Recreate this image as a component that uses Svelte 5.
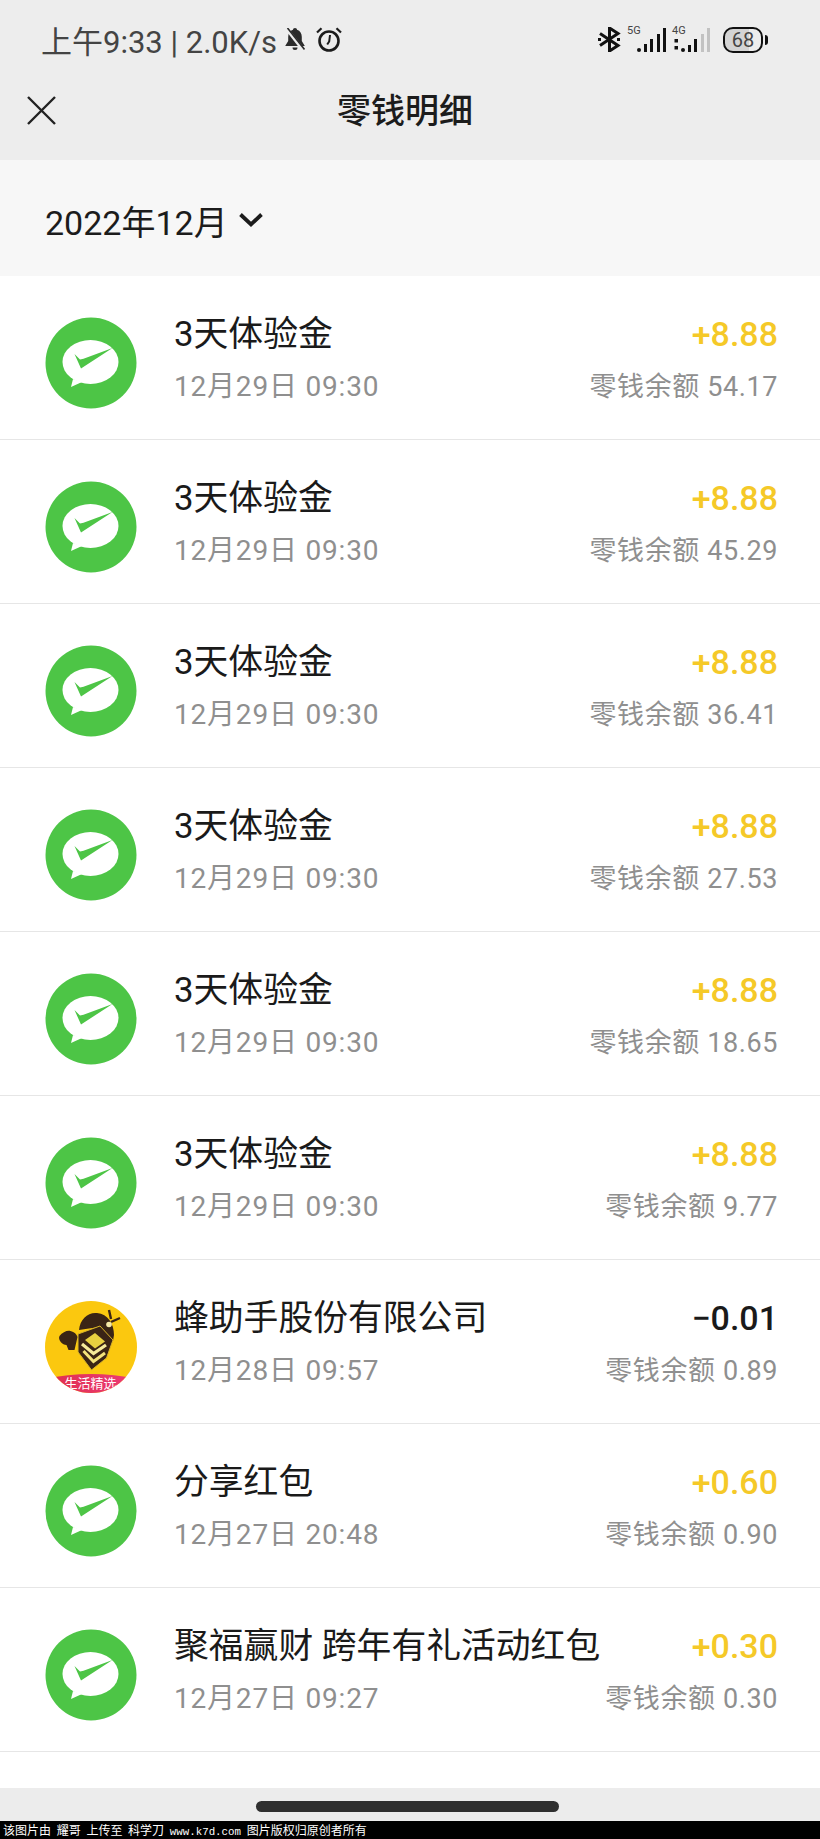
<script>
  const rows = [
    { kind: 'pay', title: '3天体验金', time: '12月29日 09:30', amount: '+8.88', balance: '54.17' },
    { kind: 'pay', title: '3天体验金', time: '12月29日 09:30', amount: '+8.88', balance: '45.29' },
    { kind: 'pay', title: '3天体验金', time: '12月29日 09:30', amount: '+8.88', balance: '36.41' },
    { kind: 'pay', title: '3天体验金', time: '12月29日 09:30', amount: '+8.88', balance: '27.53' },
    { kind: 'pay', title: '3天体验金', time: '12月29日 09:30', amount: '+8.88', balance: '18.65' },
    { kind: 'pay', title: '3天体验金', time: '12月29日 09:30', amount: '+8.88', balance: '9.77' },
    { kind: 'bee', title: '蜂助手股份有限公司', time: '12月28日 09:57', amount: '−0.01', balance: '0.89' },
    { kind: 'pay', title: '分享红包', time: '12月27日 20:48', amount: '+0.60', balance: '0.90' },
    { kind: 'pay', title: '聚福赢财 跨年有礼活动红包', time: '12月27日 09:27', amount: '+0.30', balance: '0.30' }
  ];
</script>

<div class="page">
  <header class="top">
    <div class="status">
      <div class="status__left">
        <span>上午9:33 | 2.0K/s</span>
        <svg class="bell" width="20" height="23" viewBox="0 0 20 23">
          <path d="M10 0c1.200 0 2 .8 2 1.800 3.200 1 4.800 3.800 4.800 7.200v4l3 5H.2l3-5V9c0-3.400 1.600-6.200 4.800-7.200C8 .8 8.800 0 10 0z" fill="#2b2b2b"/>
          <path d="M7.500 19.500h5a2.500 2.500 0 0 1-5 0z" fill="#2b2b2b"/>
          <path d="M1 0l18 23" stroke="#ededed" stroke-width="3.500"/>
          <path d="M2.500 0l17 21.500" stroke="#2b2b2b" stroke-width="1.600"/>
        </svg>
        <svg class="clock" width="26" height="25" viewBox="0 0 26 25" fill="none" stroke="#1c1c1c">
          <circle cx="13" cy="14" r="9.500" stroke-width="2.600"/>
          <path d="M14 8l-.8 6.500-2 3" stroke-width="2"/>
          <path d="M1 5.500L5.500 1.200M25 5.500L20.500 1.200" stroke-width="2.200"/>
        </svg>
      </div>
      <div class="status__right">
        <svg class="bt" width="23" height="25" viewBox="0 0 23 25" fill="none" stroke="#111" stroke-width="3">
          <path d="M2 6.500l18 12-8.500 5.500V1L20 6.500 2 18.500"/>
          <rect x="0" y="11" width="3" height="3" fill="#111" stroke="none"/>
          <rect x="19" y="11" width="3" height="3" fill="#111" stroke="none"/>
        </svg>
        <div class="signal signal--five">
          <span class="signal__tag">5G</span>
          <svg width="29" height="25" viewBox="0 0 29 25" fill="#111">
            <circle cx="2" cy="23" r="2"/>
            <rect x="7" y="17" width="3" height="8"/>
            <rect x="13" y="12" width="3" height="13"/>
            <rect x="20" y="7" width="3" height="18"/>
            <rect x="26" y="1" width="3" height="24"/>
          </svg>
        </div>
        <div class="signal">
          <span class="signal__tag">4G</span>
          <svg width="38" height="25" viewBox="0 0 38 25" fill="#111">
            <rect x="2.500" y="12" width="3.500" height="3.500"/>
            <rect x="2.500" y="19" width="3.500" height="3.500"/>
            <circle cx="11" cy="23" r="2"/>
            <rect x="16" y="18" width="3" height="7"/>
            <rect x="22" y="12" width="3" height="13"/>
            <rect x="29" y="7" width="3" height="18" fill="#c2c2c2"/>
            <rect x="35" y="1" width="3" height="24" fill="#c2c2c2"/>
          </svg>
        </div>
        <div class="battery">
          <div class="battery__body"><span>68</span></div>
          <div class="battery__cap"></div>
        </div>
      </div>
    </div>
    <div class="nav">
      <svg class="close" width="29" height="29" viewBox="0 0 29 29" fill="none" stroke="#222" stroke-width="2.400">
        <path d="M1 1l27 27M28 1L1 28"/>
      </svg>
      <h1>零钱明细</h1>
    </div>
  </header>

  <div class="month">
    <span>2022年12月</span>
    <svg width="24" height="16" viewBox="0 0 24 16" fill="none" stroke="#1c1c1c" stroke-width="3.800">
      <path d="M1.500 2.500L12 12.500 22.500 2.500"/>
    </svg>
  </div>

  <ul class="list">
    {#each rows as row}
      <li class="row">
        <div class="avatar">
          {#if row.kind === 'pay'}
            <svg width="92" height="92" viewBox="0 0 92 92">
              <circle cx="46" cy="46" r="45.500" fill="#4dc546"/>
              <ellipse cx="45.500" cy="45" rx="28" ry="22" fill="#fff"/>
              <path d="M28 62l-2 8 11-5z" fill="#fff"/>
              <path d="M29.500 37l5.500 5.500 3.500-.8L67.500 31 36 51.500z" fill="#4dc546"/>
            </svg>
          {:else}
            <svg width="92" height="92" viewBox="0 0 92 92">
              <defs>
                <clipPath id="beeClip"><circle cx="46" cy="46" r="46"/></clipPath>
                <linearGradient id="beeBand" x1="0" x2="1" y1="0" y2="0">
                  <stop offset="0" stop-color="#e0304c"/>
                  <stop offset="1" stop-color="#ec3a78"/>
                </linearGradient>
              </defs>
              <g clip-path="url(#beeClip)">
                <rect width="92" height="92" fill="#fbc80f"/>
                <path d="M0 78Q46 68 92 78V92H0z" fill="url(#beeBand)"/>
                <path d="M34 29C35 18 43 11 52 12c11 1 17 11 17 22l-1 6-14-14z" fill="#3a2415"/>
                <path d="M64 9l2 9M75 17l-9 4" stroke="#3a2415" stroke-width="2.400" fill="none"/>
                <circle cx="64" cy="23.500" r="2.800" fill="#f6e9a8"/>
                <path d="M33 33l22-8 13 14-6.500 18L46.500 69 33 51z" fill="#3a2415" stroke="#d9b52a" stroke-width="1"/>
                <path d="M40 39l10-7 10 8.500-10 7z" fill="#e8d040"/>
                <path d="M37 43l11.500 9.500L61 44" fill="none" stroke="#f5ea9a" stroke-width="3.200"/>
                <path d="M38.500 50l10 10.500L60 52" fill="none" stroke="#f3e27a" stroke-width="3"/>
                <path d="M14.500 35c3-4 8-6 11-5 4 1 6 3 7 6l-3 13h-6l-2-5c-4 0-9-5-7-9z" fill="#3a2415"/>
                <text x="45.500" y="87" class="bee-text" text-anchor="middle">生活精选</text>
              </g>
            </svg>
          {/if}
        </div>
        <div class="row__main">
          <div class="row__title">{row.title}</div>
          <div class="row__time">{row.time}</div>
        </div>
        <div class="row__side">
          <div class="row__amount" class:row__amount--out={row.amount[0] !== '+'}>{row.amount}</div>
          <div class="row__balance">零钱余额 {row.balance}</div>
        </div>
      </li>
    {/each}
  </ul>

  <div class="spacer"></div>
  <div class="home"><div class="home__bar"></div></div>
  <div class="mark">该图片由 耀哥 上传至 科学刀 <span class="mark__url">www.k7d.com</span> 图片版权归原创者所有</div>
</div>

<style>
  :global(body) {
    margin: 0;
    background: #fff;
  }
  .page {
    width: 820px;
    height: 1839px;
    display: flex;
    flex-direction: column;
    overflow: hidden;
    font-family: Roboto, "Noto Sans CJK SC", sans-serif;
    color: #1a1a1a;
  }
  .top {
    height: 160px;
    flex: none;
    background: #ededed;
    display: flex;
    flex-direction: column;
  }
  .status {
    height: 79px;
    flex: none;
    display: flex;
    justify-content: space-between;
    align-items: center;
    padding: 0 52px 0 41px;
    box-sizing: border-box;
  }
  .status__left {
    display: flex;
    align-items: center;
    font-size: 31px;
    color: #444;
    gap: 8px;
  }
  .clock {
    margin-left: 3px;
  }
  .status__right {
    display: flex;
    align-items: center;
    gap: 6px;
  }
  .signal {
    position: relative;
    display: flex;
  }
  .signal--five {
    padding-left: 10px;
  }
  .signal__tag {
    position: absolute;
    left: 0;
    top: -3px;
    font-size: 11px;
    line-height: 13px;
    color: #444;
  }
  .battery {
    display: flex;
    align-items: center;
    margin-left: 7px;
    gap: 2px;
  }
  .battery__body {
    width: 40px;
    height: 26px;
    box-sizing: border-box;
    border: 2.500px solid #111;
    border-radius: 10px;
    display: flex;
    align-items: center;
    justify-content: center;
    background: linear-gradient(90deg, #d4d4d4 68%, #ededed 68%);
    background-clip: padding-box;
    font-size: 20px;
    color: #444;
  }
  .battery__cap {
    width: 3px;
    height: 10px;
    background: #111;
    border-radius: 0 3px 3px 0;
  }
  .nav {
    flex: 1;
    position: relative;
    display: flex;
    align-items: flex-start;
    justify-content: center;
    padding-right: 10px;
  }
  .close {
    position: absolute;
    left: 27px;
    top: 17px;
  }
  h1 {
    margin: 7px 0 0;
    font-size: 34px;
    font-weight: 500;
    line-height: 50px;
    color: #1c1c1c;
  }
  .month {
    height: 116px;
    flex: none;
    box-sizing: border-box;
    background: #f7f7f7;
    display: flex;
    align-items: center;
    padding: 4px 0 0 45px;
    gap: 11px;
    font-size: 34px;
    color: #1c1c1c;
  }
  .list {
    margin: 0;
    padding: 0;
    list-style: none;
    flex: none;
  }
  .row {
    height: 164px;
    box-sizing: border-box;
    border-bottom: 1px solid #e6e6e6;
    display: flex;
    align-items: center;
    padding: 0 42px 0 45px;
  }
  .avatar {
    width: 92px;
    height: 92px;
    flex: none;
    display: flex;
    margin-top: 10px;
  }
  .bee-text {
    font-size: 13px;
    fill: #fff;
    font-family: "Noto Sans CJK SC", sans-serif;
  }
  .row__main {
    margin-left: 37px;
    flex: 1;
    min-width: 0;
    padding-top: 3px;
  }
  .row__title {
    font-size: 34.800px;
    line-height: 50px;
    color: #1a1a1a;
    white-space: nowrap;
  }
  .row__time {
    font-size: 28px;
    letter-spacing: 0.8px;
    line-height: 44px;
    margin-top: 6px;
    color: #8f8f8f;
  }
  .row__side {
    text-align: right;
    flex: none;
    padding-top: 3px;
  }
  .row__amount {
    font-size: 34px;
    line-height: 50px;
    font-weight: 500;
    color: #f5c928;
  }
  .row__amount--out {
    color: #1a1a1a;
  }
  .row__balance {
    font-size: 27px;
    letter-spacing: 0.6px;
    line-height: 44px;
    margin-top: 6px;
    color: #8f8f8f;
  }
  .spacer {
    flex: 1;
  }
  .home {
    height: 33px;
    flex: none;
    box-sizing: border-box;
    background: #ececec;
    display: flex;
    justify-content: center;
    align-items: center;
    padding: 4px 5px 0 0;
  }
  .home__bar {
    width: 303px;
    height: 11px;
    border-radius: 6px;
    background: #2f2f2f;
  }
  .mark {
    height: 18px;
    flex: none;
    background: #000;
    color: #fff;
    font-size: 12px;
    line-height: 18px;
    padding-left: 3px;
    white-space: nowrap;
    word-spacing: 3px;
    font-family: "Noto Sans CJK SC", sans-serif;
  }
  .mark__url {
    font-family: "Liberation Mono", monospace;
    font-size: 10.800px;
  }
</style>
